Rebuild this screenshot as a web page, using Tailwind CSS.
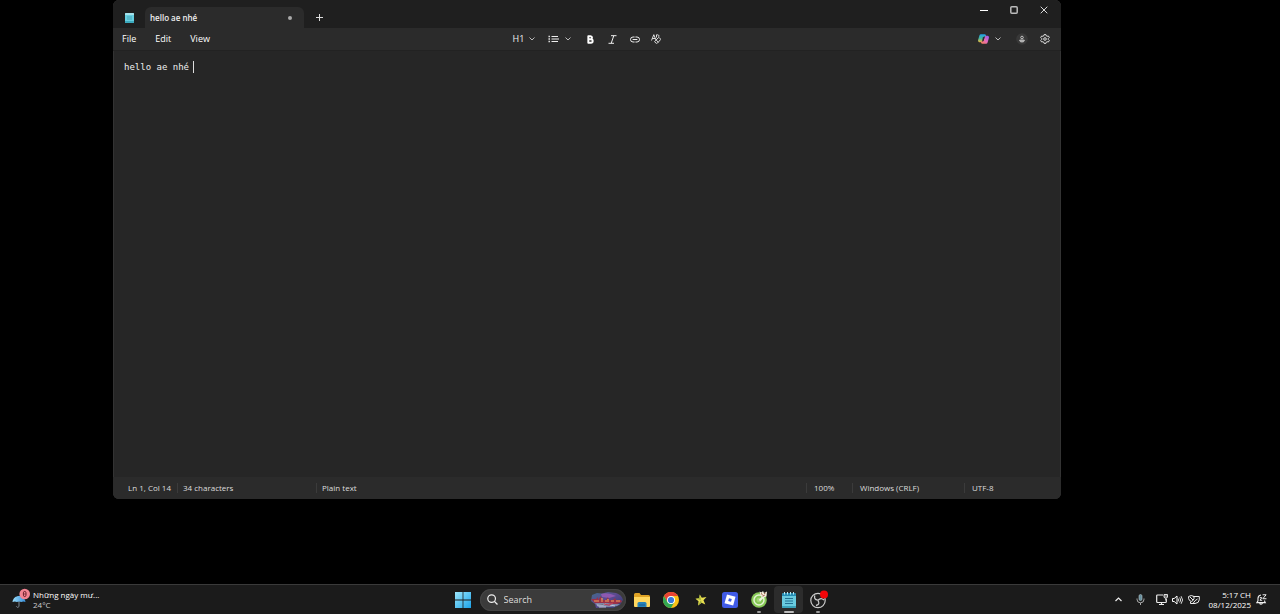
<!DOCTYPE html>
<html lang="vi">
<head>
<meta charset="utf-8">
<title>hello ae nhé - Notepad</title>
<script src="https://cdn.jsdelivr.net/npm/@tailwindcss/browser@4"></script>
</head>
<body class="flex h-screen flex-col overflow-hidden bg-black font-['Open_Sans','Noto_Sans',sans-serif] text-[8px] leading-[10px] font-medium text-white">
<main class="relative min-h-0 flex-1">
  <section class="absolute top-0 right-[219px] bottom-[85px] left-[113px] flex flex-col overflow-hidden rounded-md bg-[#262626] shadow-[inset_0_0_0_1px_#333]" aria-label="Notepad">
    <header class="flex h-7 items-end bg-[#1f1f1f]">
      <div class="flex h-[21px] w-8 items-center justify-center">
        <svg class="h-[10px] w-[9px]" viewBox="0 0 9 10"><rect width="9" height="10" rx="1" fill="#67cfe0"/><path d="M0 1a1 1 0 0 1 1-1h7a1 1 0 0 1 1 1v1H0z" fill="#a5e3ec"/><path d="M2 4h5M2 6h5" stroke="#398fa5" stroke-width=".7"/><path d="M0 8h9v1a1 1 0 0 1-1 1H1a1 1 0 0 1-1-1z" fill="#3ba9bd"/></svg>
      </div>
      <div class="flex h-[21px] w-[159px] items-center justify-between rounded-t-md bg-[#2b2b2b] pr-3 pl-[5px]">
        <span class="font-semibold text-[#eee]">hello ae nhé</span>
        <span class="size-1 rounded-full bg-[#aaa]"></span>
      </div>
      <button aria-label="New tab" class="flex h-[21px] w-[30px] items-center justify-center"><svg class="size-[7px]" viewBox="0 0 7 7"><path d="M3.5 0v7M0 3.5h7" stroke="#ddd"/></svg></button>
      <div class="ml-auto flex h-5 self-start pr-0.5">
        <button aria-label="Minimize" class="flex w-[30px] items-center justify-center"><svg class="size-2" viewBox="0 0 8 8"><path d="M0 4.500h8" stroke="#fff"/></svg></button>
        <button aria-label="Maximize" class="flex w-[30px] items-center justify-center"><svg class="size-2" viewBox="0 0 8 8"><rect x=".8" y=".8" width="6.400" height="6.400" rx="1" fill="none" stroke="#bbb" stroke-width="1.500"/></svg></button>
        <button aria-label="Close" class="flex w-[30px] items-center justify-center"><svg class="size-2" viewBox="0 0 8 8"><path d="M.7.7l6.600 6.600M7.300.7L.7 7.300" stroke="#eee" stroke-width=".9"/></svg></button>
      </div>
    </header>
    <div class="grid h-[22px] grid-cols-[1fr_auto_1fr] items-center bg-[#2b2b2b]">
      <nav class="flex gap-[19px] pl-[9px] text-[9px]"><button>File</button><button>Edit</button><button>View</button></nav>
      <div class="flex items-center gap-[13px]">
        <button class="flex items-center gap-[5px] text-[9px] text-[#eee]">H1<svg class="h-1 w-1.5" viewBox="0 0 6 4"><path d="M.5.500L3 3 5.500.5" fill="none" stroke="#ccc" stroke-width=".9"/></svg></button>
        <button aria-label="Lists" class="mr-0.5 flex items-center gap-1.5"><svg class="h-2 w-[11px]" viewBox="0 0 11 8"><path d="M3.500 1.500H10M3.500 4H11M3.500 6.500H10" stroke="#eee"/><path d="M.5 1.500h1.400M.5 4h1.400M.5 6.500h1.400" stroke="#eee" stroke-width="1.300"/></svg><svg class="h-1 w-1.5" viewBox="0 0 6 4"><path d="M.5.500L3 3 5.500.5" fill="none" stroke="#ccc" stroke-width=".9"/></svg></button>
        <button aria-label="Bold" class="w-[9px]"><svg class="mx-auto h-[9px] w-[7px]" viewBox="0 0 7 9"><path d="M1.300 1.200h2.200a1.500 1.500 0 0 1 0 3.100H1.300zM1.300 4.300h2.700a1.700 1.700 0 0 1 0 3.400H1.300z" fill="none" stroke="#fff" stroke-width="1.900" stroke-linejoin="round"/></svg></button>
        <button aria-label="Italic" class="w-[9px]"><svg class="size-[9px]" viewBox="0 0 9 9"><path d="M3 .7h5.500M.5 8.300H6M5.800.7L3.200 8.300" stroke="#eee"/></svg></button>
        <button aria-label="Link" class="-mr-0.5"><svg class="h-[7px] w-[10px]" viewBox="0 0 10 7"><path d="M4.200 1H3a2.500 2.500 0 0 0 0 5h1.200M5.800 1H7a2.500 2.500 0 0 1 0 5H5.800M3 3.500h4" fill="none" stroke="#eee" stroke-linecap="round"/></svg></button>
        <button aria-label="Clear formatting"><svg class="size-[10px]" viewBox="0 0 10 10"><path d="M.5 6.500L2.800.7 5 6M1.300 4.500h2.800M5.500 3.500V.8h1.200a1.200 1.200 0 0 1 .8 2.100" fill="none" stroke="#eee" stroke-width=".9" stroke-linejoin="round"/><path d="M3.800 7.400l3.500-3.700a.7.7 0 0 1 1 0l1.100 1.100a.7.7 0 0 1 0 1L6.300 9.200a.7.7 0 0 1-1 0L3.800 8.100a.5.5 0 0 1 0-.7zM5.100 6l2.200 2.200" fill="none" stroke="#eee" stroke-width=".9"/></svg></button>
      </div>
      <div class="flex items-center justify-end pr-[11px]">
        <button aria-label="Copilot" class="flex items-center gap-1.5"><svg class="h-[10px] w-[11px]" viewBox="0 0 11 10"><defs><linearGradient id="cpA" x1="0" y1="0" x2="0" y2="1"><stop stop-color="#219eed"/><stop offset=".5" stop-color="#42b6a0"/><stop offset="1" stop-color="#efb93a"/></linearGradient><linearGradient id="cpB" x1="1" y1="0" x2="0" y2="1"><stop stop-color="#8c5af1"/><stop offset=".5" stop-color="#e66abb"/><stop offset="1" stop-color="#f7854d"/></linearGradient></defs><path d="M3 .2h3.700a1.400 1.400 0 0 1 1.200 1L8.200 2.500H6.500a1.300 1.300 0 0 0-1.200 1L4.100 7.200a1.400 1.400 0 0 1-1.300 1H1.400C.2 8.200-.2 7 .1 5.900l1.300-4.500A1.700 1.700 0 0 1 3 .2z" fill="url(#cpA)"/><path d="M8 9.800H4.300a1.400 1.400 0 0 1-1.200-1L2.800 7.500h1.700a1.300 1.300 0 0 0 1.200-1l1.200-3.700a1.400 1.400 0 0 1 1.300-1h1.400c1.200 0 1.600 1.200 1.300 2.300L9.600 8.600A1.700 1.700 0 0 1 8 9.800z" fill="url(#cpB)"/><path d="M4.800 3.300h1.500L5.700 6.500H4.500z" fill="#292a36"/></svg><svg class="h-1 w-1.5" viewBox="0 0 6 4"><path d="M.5.500L3 3 5.500.5" fill="none" stroke="#ccc" stroke-width=".9"/></svg></button>
        <button aria-label="Account" class="ml-[15px]"><svg class="size-3" viewBox="0 0 12 12"><circle cx="6" cy="6" r="5.800" fill="#383838"/><circle cx="6" cy="4.500" r="1.300" fill="none" stroke="#ddd" stroke-width=".8"/><path d="M3.700 7h4.600v.5c0 2-4.600 2-4.600 0z" fill="#999" stroke="#ddd" stroke-width=".7"/></svg></button>
        <button aria-label="Settings" class="ml-3"><svg class="size-[10px]" viewBox="0 0 10 10"><path d="M4.100.6h1.800l.4 1.300.7.4 1.400-.3.9 1.500-1 1v1l1 1-.9 1.500L7 7.700l-.7.4-.4 1.300H4.100l-.4-1.300-.7-.4L1.600 8 .7 6.500l1-1v-1l-1-1L1.600 2l1.400.3.700-.4z" fill="none" stroke="#eee" stroke-width=".9" stroke-linejoin="round"/><circle cx="5" cy="5" r="1.300" fill="none" stroke="#eee" stroke-width=".9"/></svg></button>
      </div>
    </div>
    <div class="flex-1 border-t border-[#222] px-[11px] pt-[9px]">
      <div role="textbox" aria-label="Text editor" aria-multiline="true" contenteditable="true" spellcheck="false" class="flex gap-1 font-['DejaVu_Sans_Mono',monospace] text-[9px] leading-[14px] text-[#eee] outline-none"><span>hello ae nhé</span><span class="my-px w-px bg-[#ddd]"></span></div>
    </div>
    <footer class="flex h-[22px] items-center bg-[#2b2b2b] text-[#ddd]">
      <span class="w-[65px] border-r border-[#3b3b3b] pl-[15px] whitespace-nowrap">Ln 1, Col 14</span>
      <span class="w-[139px] border-r border-[#3b3b3b] pl-[5px]">34 characters</span>
      <span class="pl-[5px]">Plain text</span>
      <span class="ml-auto w-[46px] border-l border-[#3b3b3b] pl-[7px]">100%</span>
      <span class="w-28 border-l border-[#3b3b3b] pl-[7px]">Windows (CRLF)</span>
      <span class="w-[97px] border-l border-[#3b3b3b] pl-[7px]">UTF-8</span>
    </footer>
  </section>
</main>
<footer class="grid h-[30px] grid-cols-[1fr_auto_1fr] border-t border-[#3a3a3a] bg-[#1b1b1b]" aria-label="Taskbar">
  <button class="flex items-center gap-[3px] justify-self-start pl-3 text-left" aria-label="Weather">
    <svg class="mb-1 h-5 w-[18px]" viewBox="0 0 18 20"><defs><linearGradient id="um" x1="0" x2="1"><stop stop-color="#9bdcf8"/><stop offset="1" stop-color="#378fdb"/></linearGradient></defs><path d="M7 11v7c0 1.800-2.500 1.800-2.500.2" fill="none" stroke="#7c8994"/><path d="M.5 14C1 10 4 8 7 8s6 2 6.500 6c-1.500-.8-3-.8-4.200 0-1.300-.8-3-.8-4.400 0-1.300-.8-3-.8-4.400 0z" fill="url(#um)"/><circle cx="12.700" cy="6" r="5.300" fill="#f28492"/><path d="M11.400 4.800c0-1.900 2.600-1.900 2.600 0v2.400c0 1.900-2.600 1.900-2.600 0z" fill="none" stroke="#6b202b" stroke-width="1"/><path d="M11.500 6H14" stroke="#6b202b" stroke-width=".7"/></svg>
    <span class="block"><span class="block">Những ngày mư...</span><span class="block text-[#ccc]">24°C</span></span>
  </button>
  <div class="flex items-center gap-0.5">
    <button aria-label="Start" class="flex h-full w-[30px] items-center justify-center"><svg class="size-4" viewBox="0 0 16 16"><defs><linearGradient id="wn" x1="0" y1="0" x2="1" y2="1"><stop stop-color="#9ce6fb"/><stop offset="1" stop-color="#1ba3ea"/></linearGradient></defs><path d="M0 0h7.600v7.600H0zM8.400 0H16v7.600H8.400zM0 8.400h7.600V16H0zM8.400 8.400H16V16H8.400z" fill="url(#wn)"/></svg></button>
    <label class="flex h-[22px] w-[146px] items-center overflow-hidden rounded-full bg-[#3b3b3b] pl-[7px] ring-1 ring-[#444] ring-inset">
      <svg class="size-[11px] shrink-0" viewBox="0 0 10 10"><circle cx="4.200" cy="4.200" r="3.500" fill="none" stroke="#eee" stroke-width="1.100"/><path d="M6.700 6.700l2.800 2.800" stroke="#eee" stroke-width="1.200"/></svg>
      <input type="search" aria-label="Search" placeholder="Search" class="min-w-0 flex-1 bg-transparent pl-1.5 text-[9px] leading-3 text-white outline-none placeholder:text-[#ddd]">
      <svg class="h-[18px] w-9 shrink-0" viewBox="0 0 36 18"><defs><linearGradient id="sky" x1="0" y1="0" x2="1" y2="1"><stop stop-color="#3f6c8c"/><stop offset=".45" stop-color="#5d4a91"/><stop offset="1" stop-color="#2c3a70"/></linearGradient></defs><path d="M2 4l5-2 5 .5L18 1l8 1q6 2 7 7l-3 5-7 3-9-.5-8 .5-1-4-4-3z" fill="url(#sky)"/><path d="M11 3q7-2 15 2l-7 2-7-1z" fill="#8d59b0"/><path d="M1 8h5l2-2v3l3-4 1 4h4l2-3 1 3h4l2-2 1 2h5l1 2-5 2H6z" fill="#9c3147"/><path d="M4 10h5M11 10h2M15 10h4M21 10h3M26 10h4M12 7v2M18 8v1" stroke="#f0a35e" stroke-width="1.200"/><path d="M5 12h12l6 1h7l-3 2-7 1H8z" fill="#7c86a8"/><path d="M7 14h6l3-1M20 14l5 1M9 16h7" stroke="#d4d4e5" stroke-width=".8"/><path d="M14 13l5 1 4-2" stroke="#be3f59" stroke-width="1.200" fill="none"/></svg>
    </label>
    <div class="grid h-full w-[205px] grid-cols-7">
      <button aria-label="File Explorer" class="flex items-center justify-center"><svg class="size-4" viewBox="0 0 16 16"><path d="M0 2.500Q0 1 1.500 1h4L7 3h7.500Q16 3 16 4.500V8H0z" fill="#dfa325"/><path d="M0 5h16v9q0 1-1 1H1q-1 0-1-1z" fill="#ffd75e"/><path d="M3.500 15v-3.500q0-1.500 1.500-1.500h6q1.500 0 1.500 1.500V15z" fill="#2682b8"/><path d="M5 13h6" stroke="#175b91"/></svg></button>
      <button aria-label="Chrome" class="flex items-center justify-center"><svg class="size-4" viewBox="0 0 16 16"><circle cx="8" cy="8" r="8" fill="#fbc116"/><path d="M1.070 4A8 8 0 0 1 14.930 4H8L4.540 10z" fill="#e94335"/><path d="M1.070 4A8 8 0 0 0 8 16l3.460-6-6.920 0z" fill="#34a853"/><circle cx="8" cy="8" r="4" fill="#fff"/><circle cx="8" cy="8" r="3.100" fill="#3778dc"/></svg></button>
      <button aria-label="Favorites" class="flex items-center justify-center"><svg class="size-3" viewBox="0 0 12 12"><path d="M4.800.5l2 3.200 4.700-.7-3 3.300 1.800 4.200-3.700-1.800L3 11.500l.5-4.200L.5 4.800l3.700-.6z" fill="#e8df50"/><path d="M4.800.5L6 6 .5 4.800l3.700-.6zM3 11.500L6 6l.6 2.700z" fill="#9cae3b"/></svg></button>
      <button aria-label="Roblox" class="flex items-center justify-center"><svg class="size-4" viewBox="0 0 16 16"><rect width="16" height="16" rx="2.500" fill="#405be6"/><path d="M5 2.500l8.500 2.300-2.300 8.700-8.700-2.300z" fill="#fff"/><path d="M7 6.200l2.800.8L9 9.800 6.200 9z" fill="#405be6"/></svg></button>
      <button aria-label="Coc Coc" class="relative flex items-center justify-center"><svg class="size-[17px]" viewBox="0 0 17 17"><circle cx="8" cy="9" r="7.800" fill="#86c756"/><circle cx="8" cy="9" r="5" fill="none" stroke="#e3f4d2" stroke-width="1.500"/><circle cx="8" cy="9" r="2.300" fill="#a5d97b"/><path d="M8.500 9.500l5-5" stroke="#e9f5dd" stroke-width="2"/><path d="M8.500.5l2 1L12 0l1 2 3-1.500-.5 5-3.500 1-2.500-2z" fill="#f3eddc"/><path d="M10 2.500l1.500 1M13 3l1.500-1M11.500 5l2-.5" stroke="#94513a"/></svg><span class="absolute bottom-px h-0.5 w-1 rounded-full bg-[#999]"></span></button>
      <button aria-label="Notepad" class="relative my-px flex items-center justify-center rounded-sm bg-[#2c2c2c]"><svg class="h-4 w-[14px]" viewBox="0 0 14 16"><rect y="1" width="14" height="15" rx="1.500" fill="#69cbdf"/><path d="M0 2.500Q0 1 1.500 1h11Q14 1 14 2.500V4H0z" fill="#258db4"/><path d="M2.500 0v2.500M5.500 0v2.500M8.500 0v2.500M11.500 0v2.500" stroke="#bceaf2"/><path d="M3 6.500h8M3 9h8M3 11.500h8" stroke="#236f91"/><path d="M0 14h14v.5Q14 16 12.500 16h-11Q0 16 0 14.500z" fill="#3aa2ba"/></svg><span class="absolute bottom-0 h-0.5 w-[10px] rounded-full bg-[#bbb]"></span></button>
      <button aria-label="OBS Studio" class="relative flex items-center justify-center"><svg class="size-5" viewBox="0 0 20 20"><circle cx="10" cy="10.500" r="7.200" fill="#1f1f1f" stroke="#ccc" stroke-width="1.200"/><path d="M9.800 10.200Q5.500 9.500 6.800 5.500M10 10.200Q13 7 16 10M10 10.500Q12.500 14.500 8 15.500" fill="none" stroke="#ccc" stroke-width="1.300"/><circle cx="16" cy="4.500" r="4" fill="#f40509"/></svg><span class="absolute bottom-px h-0.5 w-1 rounded-full bg-[#999]"></span></button>
    </div>
  </div>
  <div class="flex items-center justify-end pr-[13px]">
    <button aria-label="Show hidden icons"><svg class="h-[5px] w-[7px]" viewBox="0 0 7 5"><path d="M.5 4L3.500 1l3 3" fill="none" stroke="#eee" stroke-width="1.200"/></svg></button>
    <button aria-label="Microphone" class="ml-[14px]"><svg class="h-[11px] w-[9px]" viewBox="0 0 9 11"><rect x="3" y=".5" width="3" height="6" rx="1.500" fill="#668f9d" stroke="#b7cbd2" stroke-width=".6"/><path d="M1 4.500v.8a3.500 3.500 0 0 0 7 0v-.8M4.500 9v2" fill="none" stroke="#bbb" stroke-width=".9"/></svg></button>
    <button aria-label="Network" class="ml-[11px]"><svg class="h-[11px] w-3" viewBox="0 0 12 11"><path d="M7 1H1.500q-.8 0-.8.8v5.900q0 .8.800.8h8q.8 0 .8-.8V5M3 10.500h5M5.500 8.500v2" fill="none" stroke="#eee" stroke-width="1.200"/><path d="M8 .5h3.500v2.800L9.800 4.500 8 3.300zM9.800 4.500v2" fill="#777" stroke="#eee" stroke-width=".9"/></svg></button>
    <button aria-label="Volume" class="ml-1"><svg class="h-[10px] w-[11px]" viewBox="0 0 11 10"><path d="M.5 3.500h1.700L5 1v8L2.200 6.500H.5z" fill="none" stroke="#fff" stroke-linejoin="round"/><path d="M6.300 3.600q1 1.400 0 2.800M7.700 2.400q2 2.600 0 5.200M9.100 1.200q3 3.800 0 7.600" fill="none" stroke="#eee" stroke-width=".9"/></svg></button>
    <button aria-label="Power saver" class="ml-[5px]"><svg class="h-[10px] w-3" viewBox="0 0 12 10"><path d="M5.500 1.500h5.800v3.200q-.2 3.500-4.300 3.800H2.500V6.800" fill="none" stroke="#eee"/><path d="M.6 1.500L3.300.5 6 1.500v2Q5.600 5.800 3.300 6.500 1 5.800.6 3.500zM2 2l3 3M5 8.500q2-3.500 4.500-4.500" fill="none" stroke="#eee"/></svg></button>
    <button class="ml-2 w-[43px] text-right whitespace-nowrap"><span class="block">5:17 CH</span><span class="block">08/12/2025</span></button>
    <button aria-label="Notifications" class="ml-[5px]"><svg class="size-[11px]" viewBox="0 0 10 10"><path d="M4.500.9Q1.800 1.300 1.800 4v2.300L.8 7.800h7.700L7.800 6.500V6M3.300 8q.3 1.300 1.300 1.300T6 8" fill="none" stroke="#eee"/><path d="M6 .7h3.200L6.200 4.300h3.300M3.500 3.300h1.800L3.600 5.700h2" fill="none" stroke="#eee" stroke-width=".9"/></svg></button>
  </div>
</footer>
</body>
</html>
